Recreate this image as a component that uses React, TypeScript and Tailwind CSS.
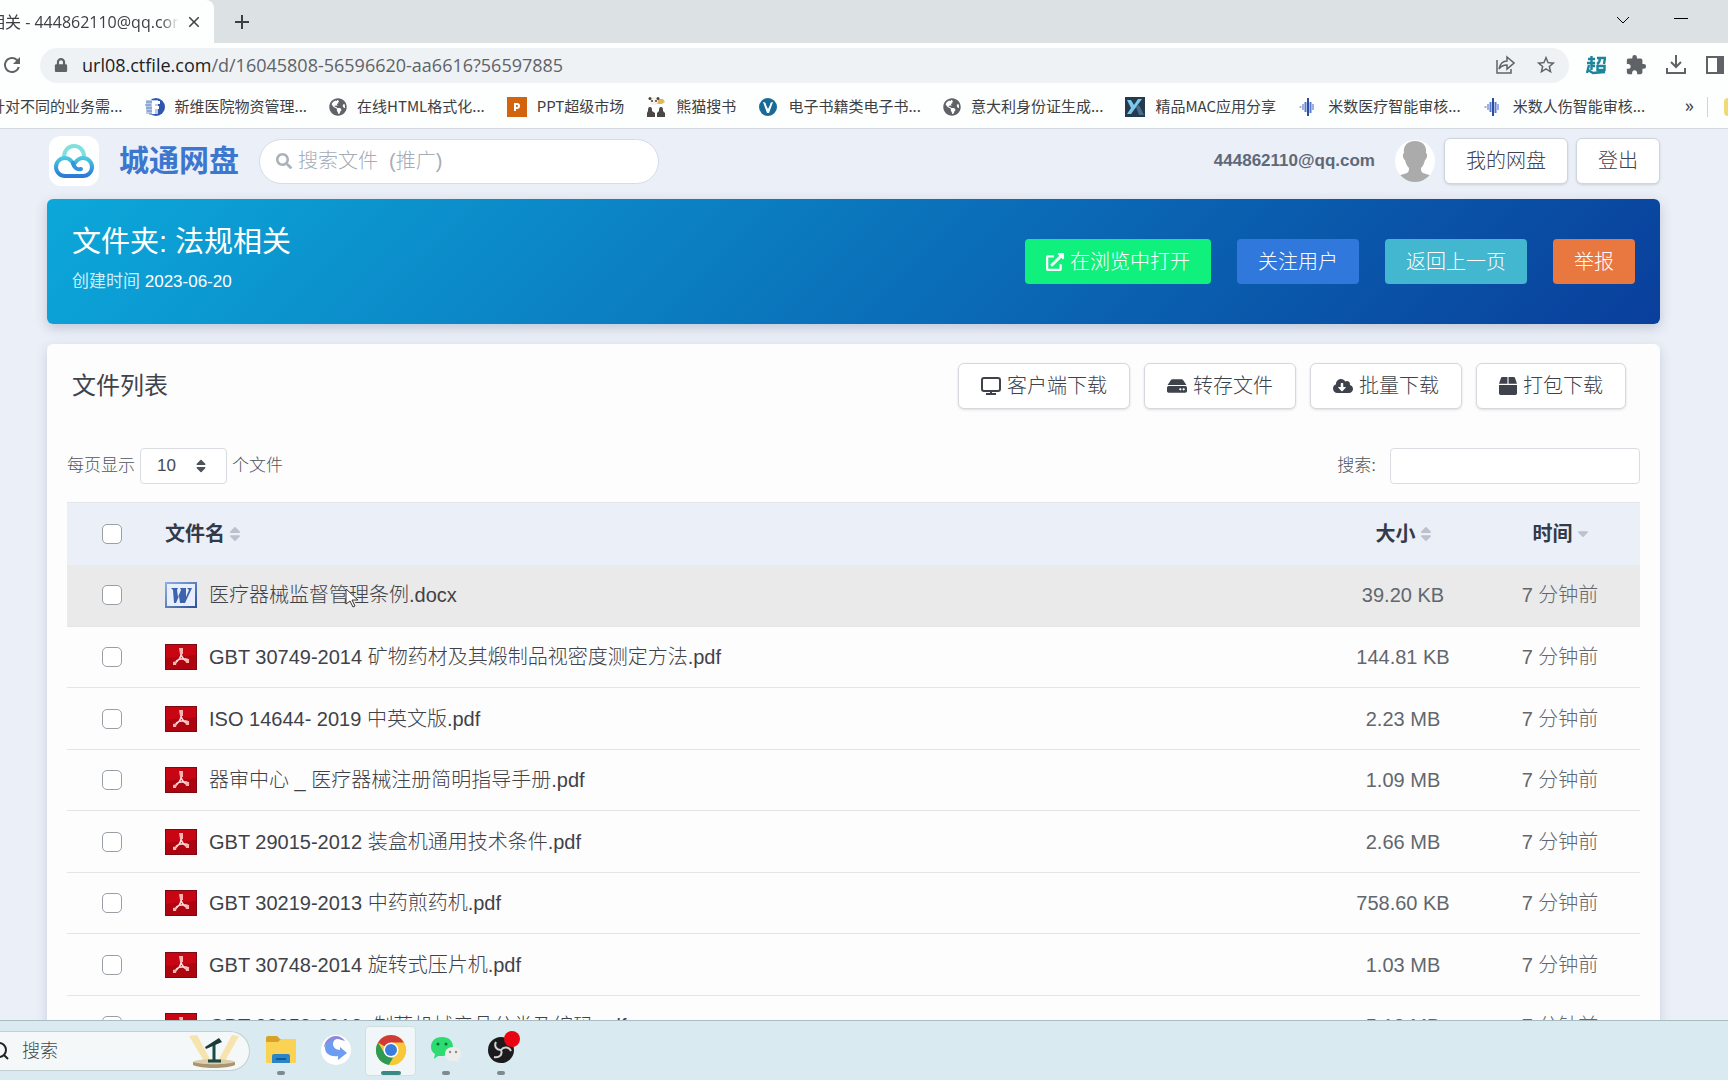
import type { ReactNode } from 'react';
import {
  FaBox,
  FaCloudDownloadAlt,
  FaExternalLinkAlt,
  FaGlobeAmericas,
  FaHdd,
  FaLock,
  FaSearch,
  FaSort,
  FaSortDown,
} from 'react-icons/fa';
import { MdClose, MdAdd, MdExtension, MdRefresh, MdStarBorder } from 'react-icons/md';

const files = [
  { name: '医疗器械监督管理条例.docx', size: '39.20 KB', type: 'doc' },
  { name: 'GBT 30749-2014 矿物药材及其煅制品视密度测定方法.pdf', size: '144.81 KB', type: 'pdf' },
  { name: 'ISO 14644- 2019 中英文版.pdf', size: '2.23 MB', type: 'pdf' },
  { name: '器审中心 _ 医疗器械注册简明指导手册.pdf', size: '1.09 MB', type: 'pdf' },
  { name: 'GBT 29015-2012 装盒机通用技术条件.pdf', size: '2.66 MB', type: 'pdf' },
  { name: 'GBT 30219-2013 中药煎药机.pdf', size: '758.60 KB', type: 'pdf' },
  { name: 'GBT 30748-2014 旋转式压片机.pdf', size: '1.03 MB', type: 'pdf' },
  { name: 'GBT 28258-2012 \u00a0制药机械产品分类及编码.pdf', size: '5.18 MB', type: 'pdf' },
];

function FormIcon() {
  return (
    <svg viewBox="0 0 20 20" className="size-5">
      <circle cx="11" cy="10" r="9" fill="#2f57b0" />
      <path d="M1 3h12v14H1z" fill="#b9cbe8" />
      <path d="M1 5h7M0 8h6M1 11h6M2 14h6M4 17h5" stroke="#5f86c6" strokeWidth="1" />
      <path d="M7 4h8v3h-5v2h4v3h-4v5H7z" fill="#fff" />
    </svg>
  );
}

function PandaIcon() {
  return (
    <svg viewBox="0 0 20 20" className="size-5">
      <path d="M3 2h14l2 3-3 2H8z" fill="#e2b65c" />
      <circle cx="8" cy="4" r="4" fill="#f5f1e8" />
      <circle cx="4" cy="1.500" r="1.500" fill="#4a423b" />
      <circle cx="12" cy="1.500" r="1.500" fill="#4a423b" />
      <circle cx="6" cy="4" r="1" fill="#4a423b" />
      <circle cx="10" cy="4" r="1" fill="#4a423b" />
      <path d="M4 10c2 0 2 2 2 4l3 2v4H1v-4l1-2c0-2 0-4 2-4zM15 10c2 0 2 2 2 4l2 2v4h-8v-4l2-2c0-2 0-4 2-4z" fill="#4b4744" />
    </svg>
  );
}

function WaveIcon() {
  return (
    <svg viewBox="0 0 20 20" className="size-5" stroke="#5a7bd0" strokeWidth="2">
      <path d="M10 1v18" stroke="#2b4da0" />
      <path d="M7.500 5v10M12.500 5v11" />
      <path d="M5 7v6M15 7v6M2.500 9v2" stroke="#9db2e4" />
    </svg>
  );
}

const bookmarks: { label: string; icon?: ReactNode }[] = [
  { label: '针对不同的业务需...' },
  { label: '新维医院物资管理...', icon: <FormIcon /> },
  { label: '在线HTML格式化...', icon: <FaGlobeAmericas className="size-[18px] text-[#5f6368]" /> },
  {
    label: 'PPT超级市场',
    icon: (
      <svg viewBox="0 0 20 20" className="size-5">
        <path d="M0 0h20v20H0z" fill="#d2640f" />
        <path d="M8 14V7h2a2 2 0 0 1 0 4H9" fill="none" stroke="#fff" strokeWidth="2" />
      </svg>
    ),
  },
  { label: '熊猫搜书', icon: <PandaIcon /> },
  {
    label: '电子书籍类电子书...',
    icon: (
      <svg viewBox="0 0 20 20" className="size-5">
        <circle cx="10" cy="10" r="9" fill="#1a6a98" />
        <path d="M5 5c2 0 3 1 3 3l2 4 2-4c0-2 1-3 3-3l-4 11H9z" fill="#fff" />
      </svg>
    ),
  },
  { label: '意大利身份证生成...', icon: <FaGlobeAmericas className="size-[18px] text-[#5f6368]" /> },
  {
    label: '精品MAC应用分享',
    icon: (
      <svg viewBox="0 0 20 20" className="size-5">
        <path d="M0 0h20v20H0z" fill="#243a4d" />
        <path d="M11 10l3-2 5 10h-5z" fill="#496c8c" />
        <path d="M2 3h4l3 5 4-6h4L6 17H2l4-6z" fill="#7cc9ee" />
      </svg>
    ),
  },
  { label: '米数医疗智能审核...', icon: <WaveIcon /> },
  { label: '米数人伤智能审核...', icon: <WaveIcon /> },
];

function BrowserBar() {
  return (
    <header className="shrink-0 border-b border-[#d3d9de] bg-[#fdfefe] font-['Open_Sans','Noto_Sans_CJK_SC',sans-serif] font-normal text-[#3c4043]">
      <div className="flex h-[43px] bg-[#dce1e4]">
        <div className="flex w-[214px] items-center gap-[6px] overflow-hidden rounded-tr-lg bg-[#fdfefe] pr-[11px]">
          <div className="flex flex-1 justify-end overflow-hidden mask-r-from-90% whitespace-nowrap">
            <span className="-mr-2 text-base">法规相关 - 444862110@qq.com</span>
          </div>
          <button aria-label="Close tab">
            <MdClose className="size-[18px]" />
          </button>
        </div>
        <button aria-label="New tab" className="ml-4">
          <MdAdd className="size-6" />
        </button>
        <div className="ml-auto flex items-center gap-11 pr-10 text-black">
          <button aria-label="Search tabs">
            <svg viewBox="0 0 14 14" className="size-[14px]" fill="none" stroke="currentColor">
              <path d="M1 2l6 6 6-6" />
            </svg>
          </button>
          <button aria-label="Minimize">
            <svg viewBox="0 0 14 14" className="size-[14px]" stroke="currentColor">
              <path d="M0 3.500h14" />
            </svg>
          </button>
        </div>
      </div>

      <div className="flex h-[44px] items-center text-[#5f6368]">
        <button aria-label="Reload" className="w-10">
          <MdRefresh className="size-6" />
        </button>
        <div className="flex h-[35px] flex-1 items-center rounded-full bg-[#eef2f4] pr-3 pl-[14px]">
          <FaLock className="mr-[14px] size-[14px]" />
          <span className="flex-1 text-lg whitespace-nowrap">
            <span className="text-[#202124]">url08.ctfile.com</span>/d/16045808-56596620-aa6616?56597885
          </span>
          <button aria-label="Share" className="mr-5">
            <svg viewBox="0 0 20 20" className="size-5" fill="none" stroke="currentColor" strokeWidth="1.500">
              <path d="M2 5v13h14v-4" />
              <path d="M12 2l7 6-7 6v-4c-4 0-6 1-8 4 1-5 4-8 8-8z" />
            </svg>
          </button>
          <button aria-label="Bookmark">
            <MdStarBorder className="size-[22px]" />
          </button>
        </div>
        <div className="flex w-[159px] items-center gap-[19px] overflow-hidden pl-[17px]">
          <svg viewBox="0 0 20 20" className="size-5 shrink-0" fill="none" stroke="#1c8599" strokeWidth="2.400">
            <path d="M2 4h7M5.500 1v14M1 8h8M5 11h4M3 10l-2 8M2 15l5 3 12-1M11 3h8l-1 6M14 3c0 3-1 5-3 6M11.500 11h7v4h-7z" />
          </svg>
          <MdExtension className="size-[22px] shrink-0" />
          <svg viewBox="0 0 20 20" className="size-5 shrink-0" fill="none" stroke="currentColor" strokeWidth="2">
            <path d="M10 0v12M5 7l5 5 5-5M1 13v5h18v-5" />
          </svg>
          <svg viewBox="0 0 20 20" className="size-5 shrink-0">
            <path d="M2 2h16v16H2z" fill="none" stroke="currentColor" strokeWidth="2" />
            <path d="M12 2h6v16h-6z" fill="currentColor" />
          </svg>
        </div>
      </div>

      <nav className="flex h-[41px] items-center pb-[2px] text-[15px]">
        <div className="-ml-[10px] flex flex-1 items-center gap-[22px] overflow-hidden font-['Noto_Sans_CJK_SC',sans-serif] whitespace-nowrap">
          {bookmarks.map((b) => (
            <a key={b.label} href="#" className="flex items-center gap-[10px]">
              {b.icon}
              {b.label}
            </a>
          ))}
        </div>
        <button aria-label="More bookmarks" className="mr-[13px] pb-1 text-lg leading-none">
          »
        </button>
        <div className="h-5 w-px bg-[#cfd4d8]" />
        <div className="ml-4 h-[18px] w-1 rounded-l-sm bg-[#f2d878]" />
      </nav>
    </header>
  );
}

function SiteHeader() {
  return (
    <div className="flex h-[70px] items-center pb-[6px]">
      <a href="#" className="flex items-center gap-5">
        <span className="ml-[2px] flex size-[50px] items-center justify-center rounded-xl bg-white">
          <svg viewBox="0 0 40 40" className="size-10" fill="none" strokeWidth="4" strokeLinecap="round">
            <defs>
              <linearGradient id="cloud" x1="0" y1="0" x2="0" y2="1">
                <stop offset="0" stopColor="#4cc8e0" />
                <stop offset="1" stopColor="#2b7ad8" />
              </linearGradient>
            </defs>
            <path d="M10 16c0-6 4-11 10-11s10 5 10 10" stroke="#7fe0dc" />
            <path d="M20 24c-2-4-5-7-9-7-5 0-9 4-9 9s4 9 9 9h18c5 0 9-4 9-9s-4-9-9-9c-4 0-6 2-8 5" stroke="url(#cloud)" />
            <path d="M19 22c1 5 4 7 8 6" stroke="#3692dc" />
          </svg>
        </span>
        <span className="text-3xl font-bold text-[#3b76cf]">城通网盘</span>
      </a>
      <label className="ml-5 flex h-[45px] w-[400px] items-center gap-[6px] rounded-full border border-[#d5dbe8] bg-white px-4 text-[#a9b1bd]">
        <FaSearch className="size-4" />
        <input
          type="search"
          aria-label="搜索文件"
          placeholder="搜索文件  (推广)"
          className="min-w-0 flex-1 text-xl outline-none placeholder:text-[#a5acb6]"
        />
      </label>
      <span className="ml-auto text-[17px] font-bold text-[#5f6878]">444862110@qq.com</span>
      <svg viewBox="0 0 40 42" className="ml-5 h-[42px] w-10">
        <clipPath id="avatar">
          <ellipse cx="20" cy="21" rx="20" ry="21" />
        </clipPath>
        <g clipPath="url(#avatar)">
          <path d="M0 0h40v42H0z" fill="#fff" />
          <path
            d="M20 1c8 0 12 5 11 12 2 1 1 6-1 7-1 4-2 6-4 8 0 4 1 5 5 6 4 1 6 2 8 4v4H1v-4c2-2 4-3 8-4 4-1 5-2 5-6-2-2-3-4-4-8-2-1-3-6-1-7C8 6 12 1 20 1z"
            fill="#ababab"
          />
        </g>
      </svg>
      <button className="ml-[9px] h-[46px] rounded-md border border-[#cfd5df] bg-white px-[21px] text-xl text-[#3c4352] shadow-sm">
        我的网盘
      </button>
      <button className="ml-2 h-[46px] rounded-md border border-[#cfd5df] bg-white px-[21px] text-xl text-[#3c4352] shadow-sm">
        登出
      </button>
    </div>
  );
}

function FolderBanner() {
  return (
    <section className="flex h-[125px] items-start rounded-md bg-[linear-gradient(135deg,#0ca8da,#093f9c)] px-[25px] text-white shadow-[0_4px_12px_rgba(60,80,120,0.25)]">
      <div className="pt-[22px]">
        <h1 className="text-[29px] leading-[42px] font-normal">文件夹: 法规相关</h1>
        <p className="mt-[5px] text-[17px] leading-7">
          <span className="font-normal text-[#c8effb]">创建时间</span> 2023-06-20
        </p>
      </div>
      <div className="ml-auto flex gap-[26px] pt-10 text-xl">
        <button className="flex h-[45px] items-center gap-[6px] rounded bg-[#10f07c] px-[21px]">
          <FaExternalLinkAlt className="size-[18px]" />
          在浏览中打开
        </button>
        <button className="h-[45px] rounded bg-[#3078dc] px-[21px]">关注用户</button>
        <button className="h-[45px] rounded bg-[#43b6d0] px-[21px]">返回上一页</button>
        <button className="h-[45px] rounded bg-[#e97840] px-[21px]">举报</button>
      </div>
    </section>
  );
}

function ActionButton({ icon, children }: { icon: ReactNode; children: ReactNode }) {
  return (
    <button className="flex h-[46px] items-center gap-[6px] rounded-md border border-[#d5d9de] bg-white px-[22px] text-xl text-[#3d424b] shadow-sm">
      {icon}
      {children}
    </button>
  );
}

function DocIcon() {
  return (
    <svg viewBox="0 0 32 26" className="h-[26px] w-8 shrink-0">
      <defs>
        <linearGradient id="docEdge" x1="0" y1="0" x2="1" y2="1">
          <stop offset="0" stopColor="#8fb0e4" />
          <stop offset="1" stopColor="#2c4f96" />
        </linearGradient>
      </defs>
      <path d="M0 0h32v26H0z" fill="url(#docEdge)" />
      <path d="M2 2h28v22H2z" fill="#e6effb" />
      <path d="M6 6h7l-1 2 1 7 3-7-1-2h6l0 9 3-7-2-2h5l-7 15h-5l-1-7-3 7H9L8 8z" fill="#3d63ac" />
    </svg>
  );
}

function PdfIcon() {
  return (
    <svg viewBox="0 0 32 26" className="h-[26px] w-8 shrink-0">
      <path d="M0 0h32v26H0z" fill="#7c0a14" />
      <path d="M1 1h30v24H1z" fill="#c80512" />
      <path d="M1 14l30-3v14H1z" fill="#ad0410" />
      <path d="M16 5v5c0 3-3 7-7 10M16 10c1 4 4 7 8 8M11 17c3-2 8-3 13-1" fill="none" stroke="#ffdedd" strokeWidth="1.400" />
      <path d="M14 4h4v6h-3zM8 18l4-1-1 4H8zM20 15h4v4h-3z" fill="#ffb3b0" />
    </svg>
  );
}

function CheckBox({ label }: { label: string }) {
  return (
    <input
      type="checkbox"
      aria-label={label}
      className="block size-5 appearance-none rounded-[5px] border border-[#9a9ea6] bg-white"
    />
  );
}

function Pointer() {
  return (
    <svg viewBox="0 0 14 20" className="absolute top-1 right-[-10px] h-5 w-[14px]">
      <path d="M1 1v15l4-3 3 6 2-1-3-6h6z" fill="#fff" stroke="#333" />
    </svg>
  );
}

function FileTable() {
  return (
    <table className="w-full table-fixed border-collapse text-xl">
      <thead>
        <tr className="h-[62px] border-t border-[#e3e7ec] bg-[#ebeff8] text-[#333a48]">
          <th className="w-[98px] pl-[35px]">
            <CheckBox label="全选" />
          </th>
          <th className="text-left">
            <span className="flex items-center gap-px">
              文件名 <FaSort className="size-[18px] text-[#bcc2cd]" />
            </span>
          </th>
          <th className="w-[154px] pl-1">
            <span className="flex items-center justify-center gap-px">
              大小 <FaSort className="size-[18px] text-[#bcc2cd]" />
            </span>
          </th>
          <th className="w-40 pl-1">
            <span className="flex items-center justify-center gap-px">
              时间 <FaSortDown className="mb-2 size-[18px] text-[#bcc2cd]" />
            </span>
          </th>
        </tr>
      </thead>
      <tbody>
        {files.map((f, i) => (
          <tr
            key={f.name}
            className={`h-[62px] border-b border-[#e3e6e9] text-[#62676d] even:h-[61px] ${i === 0 ? 'bg-[#eaeaea]' : ''}`}
          >
            <td className="pl-[35px]">
              <CheckBox label={f.name} />
            </td>
            <td>
              <a href="#" className="flex items-center gap-3 whitespace-nowrap text-[#3f4249]">
                {f.type === 'doc' ? <DocIcon /> : <PdfIcon />}
                {i === 0 ? (
                  <span>
                    <span className="relative">
                      医疗器械监督管
                      <Pointer />
                    </span>
                    理条例.docx
                  </span>
                ) : (
                  f.name
                )}
              </a>
            </td>
            <td className="text-center">{f.size}</td>
            <td className="text-center">7 分钟前</td>
          </tr>
        ))}
      </tbody>
    </table>
  );
}

function FileCard() {
  return (
    <section className="mt-5 rounded-md bg-[#fdfdfe] px-5 pt-[19px] pb-10 shadow-[0_4px_12px_rgba(60,80,120,0.2)]">
      <div className="flex items-center pr-[14px] pl-[5px]">
        <h2 className="text-2xl font-normal text-[#3f434b]">文件列表</h2>
        <div className="ml-auto flex gap-[14px]">
          <ActionButton
            icon={
              <svg viewBox="0 0 20 18" className="h-[18px] w-5" fill="none" stroke="currentColor" strokeWidth="2">
                <rect x="1" y="1" width="18" height="13" rx="2" />
                <path d="M10 14v3M5 17h10" />
              </svg>
            }
          >
            客户端下载
          </ActionButton>
          <ActionButton icon={<FaHdd className="size-5" />}>转存文件</ActionButton>
          <ActionButton icon={<FaCloudDownloadAlt className="size-5" />}>批量下载</ActionButton>
          <ActionButton icon={<FaBox className="size-[18px]" />}>打包下载</ActionButton>
        </div>
      </div>
      <div className="mt-[39px] mb-[18px] flex items-center justify-between text-[17px] text-[#50555b]">
        <label className="flex items-center gap-[5px]">
          每页显示
          <span className="relative flex">
            <select
              defaultValue="10"
              className="h-9 w-[87px] appearance-none rounded border border-[#d9dde2] bg-white pl-4 text-[#45484f]"
            >
              <option>10</option>
              <option>25</option>
              <option>50</option>
            </select>
            <FaSort className="pointer-events-none absolute top-[10px] right-[18px] size-4 text-[#4d525b]" />
          </span>
          个文件
        </label>
        <label className="flex items-center gap-[14px]">
          搜索:
          <input type="search" className="h-9 w-[250px] rounded border border-[#d9dde2] bg-white px-3" />
        </label>
      </div>
      <FileTable />
    </section>
  );
}

function TaskItem({ label, active, running, children }: { label: string; active?: boolean; running?: boolean; children: ReactNode }) {
  return (
    <button
      aria-label={label}
      className={`flex h-[50px] w-[51px] flex-col items-center rounded border pt-[7px] ${active ? 'border-[#d2dfe1] bg-[#f1f7f8]' : 'border-transparent'}`}
    >
      {children}
      {running && <span className={`mt-[5px] h-1 shrink-0 rounded-full ${active ? 'w-5 bg-[#3c8886]' : 'w-2 bg-[#80898b]'}`} />}
    </button>
  );
}

function TaskBar() {
  return (
    <footer className="flex h-[60px] shrink-0 items-center border-t border-[#a9bcc2] bg-[#d9ebf0]">
      <div className="flex h-10 w-[250px] items-center rounded-r-full border border-l-0 border-[#c3d0d2] bg-[#f4f8f8] pr-2">
        <svg viewBox="0 0 20 20" className="-ml-[11px] size-5" fill="none" stroke="#222" strokeWidth="2">
          <circle cx="10" cy="9" r="7" />
          <path d="M15 14l4 4" />
        </svg>
        <input
          aria-label="搜索"
          placeholder="搜索"
          className="ml-[13px] min-w-0 flex-1 text-lg outline-none placeholder:text-[#45484b]"
        />
        <svg viewBox="0 0 54 34" className="h-[34px] w-[54px]">
          <path d="M2 2l8-1 14 26h-7zM52 2l-7-1-14 26h7z" fill="#f7e3ae" />
          <ellipse cx="27" cy="28" rx="21" ry="3" fill="#dccdac" />
          <path d="M6 28c8 3 34 3 42 0v3c-8 4-34 4-42 0z" fill="#a99570" />
          <path d="M27 10v16M21 27h13" stroke="#1d4b43" strokeWidth="3" />
          <path d="M18 13l14-9 3 4-16 7z" fill="#1b3a38" />
        </svg>
      </div>
      <div className="ml-[5px] flex gap-1">
        <TaskItem label="文件资源管理器" running>
          <svg viewBox="0 0 32 32" className="size-8">
            <path d="M1 4q0-2 2-2h9l3 3h14q2 0 2 2v8H1z" fill="#d7a324" />
            <path d="M1 8h12l3-3h14q1 0 1 1v22q0 1-1 1H2q-1 0-1-1z" fill="#fad355" />
            <path d="M7 22q0-2 2-2h14q2 0 2 2v7H7z" fill="#2b86c9" />
            <path d="M11 25h10" stroke="#125a94" strokeWidth="2" />
          </svg>
        </TaskItem>
        <TaskItem label="下载工具">
          <svg viewBox="0 0 32 32" className="size-8">
            <circle cx="16" cy="16" r="15" fill="#fff" />
            <path d="M5 14c0-6 6-10 13-10-3 1-5 3-5 6s3 6 7 6v-3l7 6-9 7v-4C11 23 5 20 5 14z" fill="#6d9df0" />
            <path d="M16 2C9 2 4 8 4 14c2-5 7-9 14-9l7 2c-2-3-5-5-9-5z" fill="#8f89dc" />
          </svg>
        </TaskItem>
        <TaskItem label="Chrome" active running>
          <svg viewBox="0 0 32 32" className="size-8">
            <circle cx="16" cy="16" r="15" fill="#f7c93a" />
            <path d="M16 16L3 8.500A15 15 0 0 1 29 8.500z" fill="#d23b35" />
            <path d="M3 8.500L10 20l8 4-4 7A15 15 0 0 1 3 8.500z" fill="#2f9a53" />
            <path d="M16 8.500h13A15 15 0 0 1 14 31l8-13z" fill="#f7c93a" />
            <circle cx="16" cy="16" r="7.500" fill="#fff" />
            <circle cx="16" cy="16" r="6" fill="#3b7ddd" />
          </svg>
        </TaskItem>
        <TaskItem label="微信" running>
          <svg viewBox="0 0 32 32" className="size-8">
            <path d="M12 3c7 0 11 4 11 10s-4 9-11 9l-4 0-4 3 1-5c-3-2-4-4-4-7C1 7 5 3 12 3z" fill="#2ddb70" />
            <circle cx="8" cy="10" r="1.500" fill="#0b6b35" />
            <circle cx="16" cy="10" r="1.500" fill="#0b6b35" />
            <path d="M23 13c5 0 8 3 8 7 0 2-1 4-3 5l1 3-4-1c-6 1-10-2-10-7 0-4 3-7 8-7z" fill="#eceeed" />
            <circle cx="20" cy="18" r="1.200" fill="#a1847c" />
            <circle cx="26" cy="18" r="1.200" fill="#a1847c" />
          </svg>
        </TaskItem>
        <TaskItem label="OBS" running>
          <svg viewBox="0 0 32 32" className="size-8 overflow-visible">
            <circle cx="16" cy="16" r="13" fill="#1c1a1d" />
            <g fill="none" stroke="#d4d4d4" strokeWidth="2">
              <path d="M16 16c-5 0-7-4-5-8M16 16c3-4 8-3 10 1M16 16c2 5-2 8-7 7" />
            </g>
            <circle cx="27" cy="5" r="8" fill="#e90410" />
          </svg>
        </TaskItem>
      </div>
    </footer>
  );
}

export default function App() {
  return (
    <div className="flex h-screen flex-col overflow-hidden bg-[#ebeff7] font-['Liberation_Sans','Noto_Sans_CJK_SC',sans-serif] font-light">
      <BrowserBar />
      <main className="min-h-0 flex-1 overflow-hidden pr-[68px] pl-[47px]">
        <SiteHeader />
        <FolderBanner />
        <FileCard />
      </main>
      <TaskBar />
    </div>
  );
}
